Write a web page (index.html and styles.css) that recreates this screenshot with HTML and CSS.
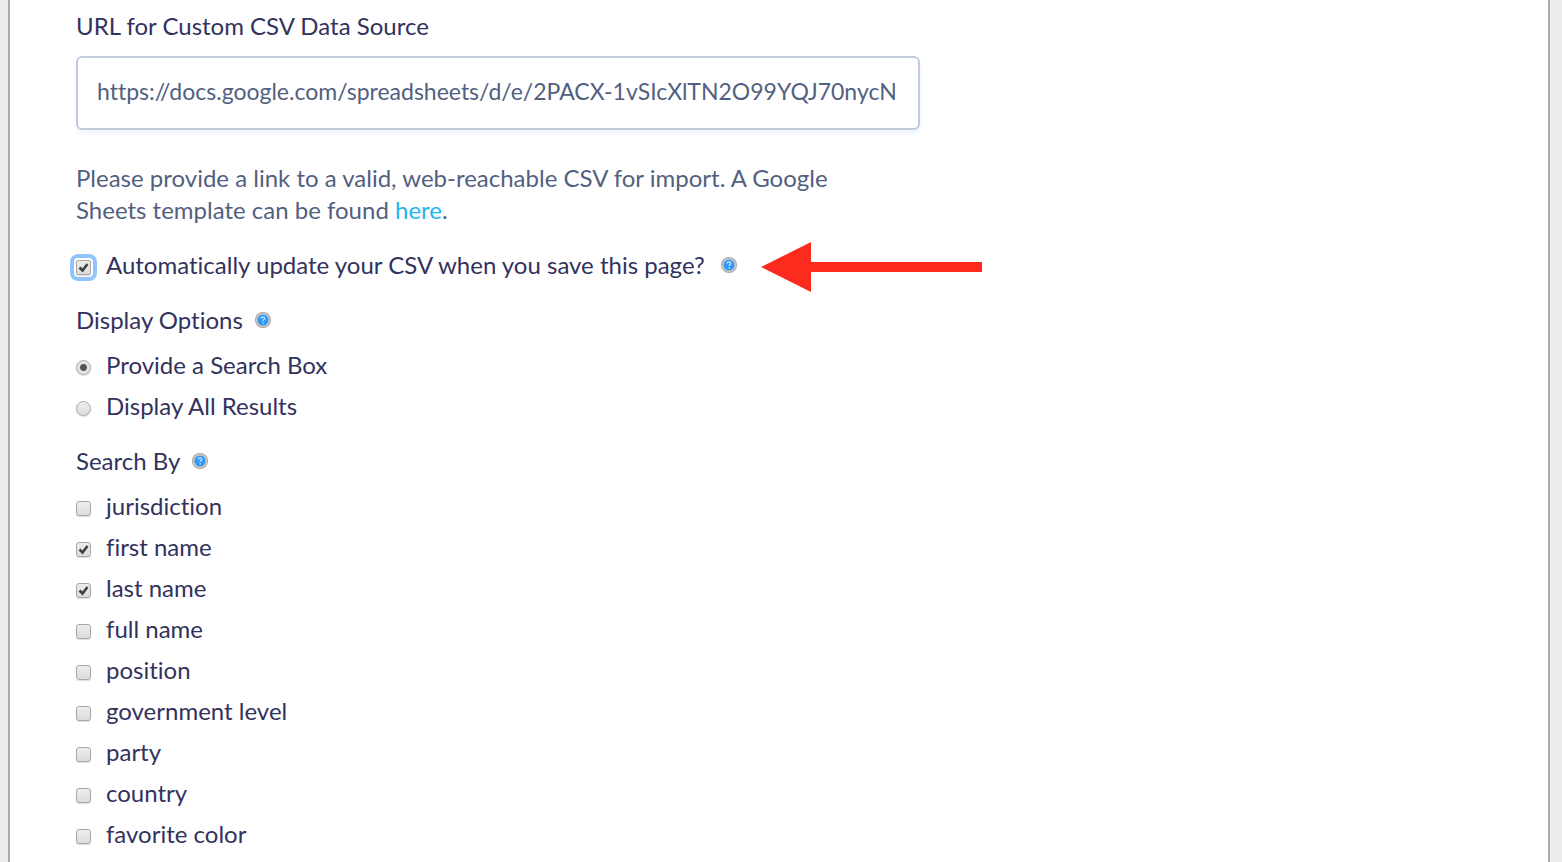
FILE: index.html
```html
<!DOCTYPE html>
<html lang="en">
<head>
  <meta charset="UTF-8" />
  <meta name="viewport" content="width=device-width, initial-scale=1.0"/>
  <title>Custom CSV Data Source</title>
  <link rel="stylesheet" href="styles.css">
</head>
<body>
  <svg class="symbols" aria-hidden="true">
    <symbol id="help-icon" viewBox="0 0 16 16">
      <circle cx="8" cy="8" r="8" fill="#a5a5a5"/>
      <circle cx="8" cy="8" r="7" fill="#cfcac3"/>
      <circle cx="8" cy="8" r="5.5" fill="#2f98fb"/>
      <path d="M6.2 6.6C6.2 5.4 7 4.9 8 4.9s1.8.6 1.8 1.5C9.8 7.5 8.2 7.5 8.2 8.9M8.2 10.2v1.2" fill="none" stroke="#b9dfff" stroke-width="1.5"/>
    </symbol>
  </svg>
  <main>
    <form>
      <div class="field">
        <label for="csv-url">URL for Custom CSV Data Source</label>
        <input type="text" id="csv-url" value="https://docs.google.com/spreadsheets/d/e/2PACX-1vSIcXlTN2O99YQJ70nycN" />
        <p>Please provide a link to a valid, web-reachable CSV for import. A Google Sheets template can be found <a href="#">here</a>.</p>
      </div>

      <div class="option auto-update">
        <input type="checkbox" id="auto-update" class="focused" checked />
        <label for="auto-update">Automatically update your CSV when you save this page?</label>
        <button type="button" class="help" aria-label="Help"><svg><use href="#help-icon"/></svg></button>
        <svg class="arrow" viewBox="0 0 221 50" aria-hidden="true">
          <path d="M0 25L50 0V20H221V30H50V50Z" fill="#fd2b1e"/>
        </svg>
      </div>

      <fieldset>
        <legend>Display Options <button type="button" class="help" aria-label="Help"><svg><use href="#help-icon"/></svg></button></legend>
        <div class="option">
          <input type="radio" name="display" id="display-search" checked />
          <label for="display-search">Provide a Search Box</label>
        </div>
        <div class="option">
          <input type="radio" name="display" id="display-all" />
          <label for="display-all">Display All Results</label>
        </div>
      </fieldset>

      <fieldset>
        <legend>Search By <button type="button" class="help" aria-label="Help"><svg><use href="#help-icon"/></svg></button></legend>
        <div class="option">
          <input type="checkbox" id="jurisdiction" />
          <label for="jurisdiction">jurisdiction</label>
        </div>
        <div class="option">
          <input type="checkbox" id="first-name" checked />
          <label for="first-name">first name</label>
        </div>
        <div class="option">
          <input type="checkbox" id="last-name" checked />
          <label for="last-name">last name</label>
        </div>
        <div class="option">
          <input type="checkbox" id="full-name" />
          <label for="full-name">full name</label>
        </div>
        <div class="option">
          <input type="checkbox" id="position" />
          <label for="position">position</label>
        </div>
        <div class="option">
          <input type="checkbox" id="government-level" />
          <label for="government-level">government level</label>
        </div>
        <div class="option">
          <input type="checkbox" id="party" />
          <label for="party">party</label>
        </div>
        <div class="option">
          <input type="checkbox" id="country" />
          <label for="country">country</label>
        </div>
        <div class="option">
          <input type="checkbox" id="favorite-color" />
          <label for="favorite-color">favorite color</label>
        </div>
      </fieldset>
    </form>
  </main>
</body>
</html>
```

FILE: styles.css
```css
* {
  box-sizing: border-box;
}
body {
  font-family: Lato, "Open Sans", sans-serif;
  font-size: 24px;
  line-height: 32px;
  font-variant-ligatures: none;
  margin: 0;
  color: #32325d;
  background-color: #ededed;
}
.symbols {
  display: none;
}
main {
  margin: 0 12px 0 8px;
  padding: 10px 66px 9px;
  min-height: 100vh;
  background: white;
  border: solid #a9a9a9;
  border-width: 0 2px;
}
form {
  display: flex;
  flex-direction: column;
  gap: 23px;
}
.field {
  width: 60%;
}
.field label {
  display: block;
  margin-bottom: 14px;
}
.field p {
  margin: 32px 0 0;
  padding-right: 48px;
  color: #525f7f;
}
.field a {
  color: #1fb6ef;
  text-decoration: none;
}
input[type="text"] {
  display: block;
  width: 100%;
  height: 74px;
  padding: 0 16px 4px 19px;
  font: inherit;
  font-size: 23px;
  color: #525f7f;
  background: white;
  border: 2px solid #c1cbdc;
  border-radius: 6px;
  box-shadow: 0 3px 4px #edf4fc;
}
fieldset {
  display: flex;
  flex-direction: column;
  gap: 9px;
  margin: 0;
  padding: 0;
  border: none;
}
legend {
  display: flex;
  align-items: center;
  gap: 12px;
  margin-bottom: 13px;
  padding: 0;
}
.option {
  display: flex;
  align-items: center;
}
input[type="checkbox"],
input[type="radio"] {
  appearance: none;
  width: 15px;
  height: 15px;
  margin: 4px 15px 0 0;
  border: 1px solid #a8a8a8;
  border-radius: 3px;
  background: linear-gradient(#ededed, #dcdcdc);
  box-shadow: 0 1px 1px #ddd;
}
input[type="radio"] {
  border-radius: 50%;
}
input[type="checkbox"]:checked {
  background: url("data:image/svg+xml,%3Csvg xmlns='http://www.w3.org/2000/svg' viewBox='0 0 13 13'%3E%3Cpath d='M2.5 6.5L5.5 9.5L10.5 3' fill='none' stroke='%23404040' stroke-width='2.6'/%3E%3C/svg%3E"), linear-gradient(#ededed, #dcdcdc);
}
input[type="radio"]:checked {
  background: radial-gradient(circle, #555 3px, #e4e4e4 4px);
}
input.focused {
  outline: 4px solid #8fc4fc;
  outline-offset: 2px;
  border-radius: 2px;
}
.help {
  display: block;
  width: 16px;
  height: 16px;
  padding: 0;
  border: none;
  background: none;
  cursor: pointer;
}
.help svg {
  display: block;
  width: 16px;
  height: 16px;
}
.auto-update .help {
  margin-left: 16px;
}
.arrow {
  width: 221px;
  height: 50px;
  margin: -7px 0 -11px 24px;
}
```
